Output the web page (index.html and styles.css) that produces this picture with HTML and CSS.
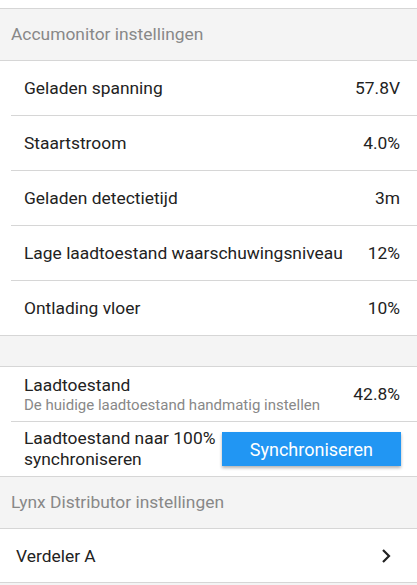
FILE: index.html
```html
<!DOCTYPE html>
<html lang="nl">
<head>
    <meta charset="UTF-8">
    <meta name="viewport" content="width=device-width, initial-scale=1.0">
    <title>Instellingen</title>
    <link rel="stylesheet" href="styles.css">
</head>
<body>

<div class="page">
    <!-- Accumonitor section -->
    <div class="section-title">Accumonitor instellingen</div>

    <div class="list">
        <div class="row">
            <span class="label">Geladen spanning</span>
            <span class="value">57.8V</span>
        </div>
        <div class="row">
            <span class="label">Staartstroom</span>
            <span class="value">4.0%</span>
        </div>
        <div class="row">
            <span class="label">Geladen detectietijd</span>
            <span class="value">3m</span>
        </div>
        <div class="row">
            <span class="label">Lage laadtoestand waarschuwingsniveau</span>
            <span class="value">12%</span>
        </div>
        <div class="row last">
            <span class="label">Ontlading vloer</span>
            <span class="value">10%</span>
        </div>
    </div>

    <div class="spacer"></div>

    <div class="list">
        <div class="row">
            <div class="label-block">
                <span class="label">Laadtoestand</span>
                <span class="sub">De huidige laadtoestand handmatig instellen</span>
            </div>
            <span class="value">42.8%</span>
        </div>
        <div class="row last">
            <span class="label two-line">Laadtoestand naar 100% synchroniseren</span>
            <button class="sync-button">Synchroniseren</button>
        </div>
    </div>

    <!-- Lynx section -->
    <div class="section-title">Lynx Distributor instellingen</div>

    <div class="nav-row">
        <span class="label">Verdeler A</span>
        <svg class="chevron" width="10" height="16" viewBox="0 0 10 16">
            <path d="M2 2 L8 8 L2 14" fill="none" stroke="#222" stroke-width="2.2"/>
        </svg>
    </div>
</div>

</body>
</html>
```

FILE: styles.css
```css
/* Settings page */
body {
    margin: 0;
    padding: 0;
    font-family: Roboto, "Liberation Sans", sans-serif;
    background-color: #f4f4f4;
    color: #222;
}

.page {
    padding-top: 8px;
    background-color: #fff;
}

.section-title {
    background-color: #f4f4f4;
    border-top: 1px solid #d6d6d6;
    border-bottom: 1px solid #d6d6d6;
    color: #888;
    font-size: 17.4px;
    height: 51px;
    line-height: 51px;
    padding-left: 11px;
}

.list {
    background-color: #fff;
    padding-left: 11px;
}

.row {
    display: flex;
    align-items: center;
    justify-content: space-between;
    height: 54px;
    padding: 0 17px 0 13px;
    border-bottom: 1px solid #d6d6d6;
}

.row.last {
    border-bottom: none;
}

.label {
    font-size: 17.4px;
}

.value {
    font-size: 17.4px;
}

.label-block {
    display: flex;
    flex-direction: column;
}

.sub {
    font-size: 15px;
    color: #888;
    margin-top: 1px;
}

.two-line {
    width: 200px;
    line-height: 21px;
}

.sync-button {
    width: 181px;
    height: 34px;
    background-color: #2196f3;
    color: #fff;
    border: none;
    font-family: Roboto, "Liberation Sans", sans-serif;
    font-size: 18px;
    box-shadow: 0 2px 3px rgba(0, 0, 0, 0.3);
    margin-right: -1px;
}

.spacer {
    height: 30px;
    background-color: #f4f4f4;
    border-top: 1px solid #d6d6d6;
    border-bottom: 1px solid #d6d6d6;
}

.nav-row {
    display: flex;
    align-items: center;
    justify-content: space-between;
    height: 53px;
    padding: 0 26px 0 16px;
    background-color: #fff;
    border-bottom: 1px solid #d6d6d6;
}
```
